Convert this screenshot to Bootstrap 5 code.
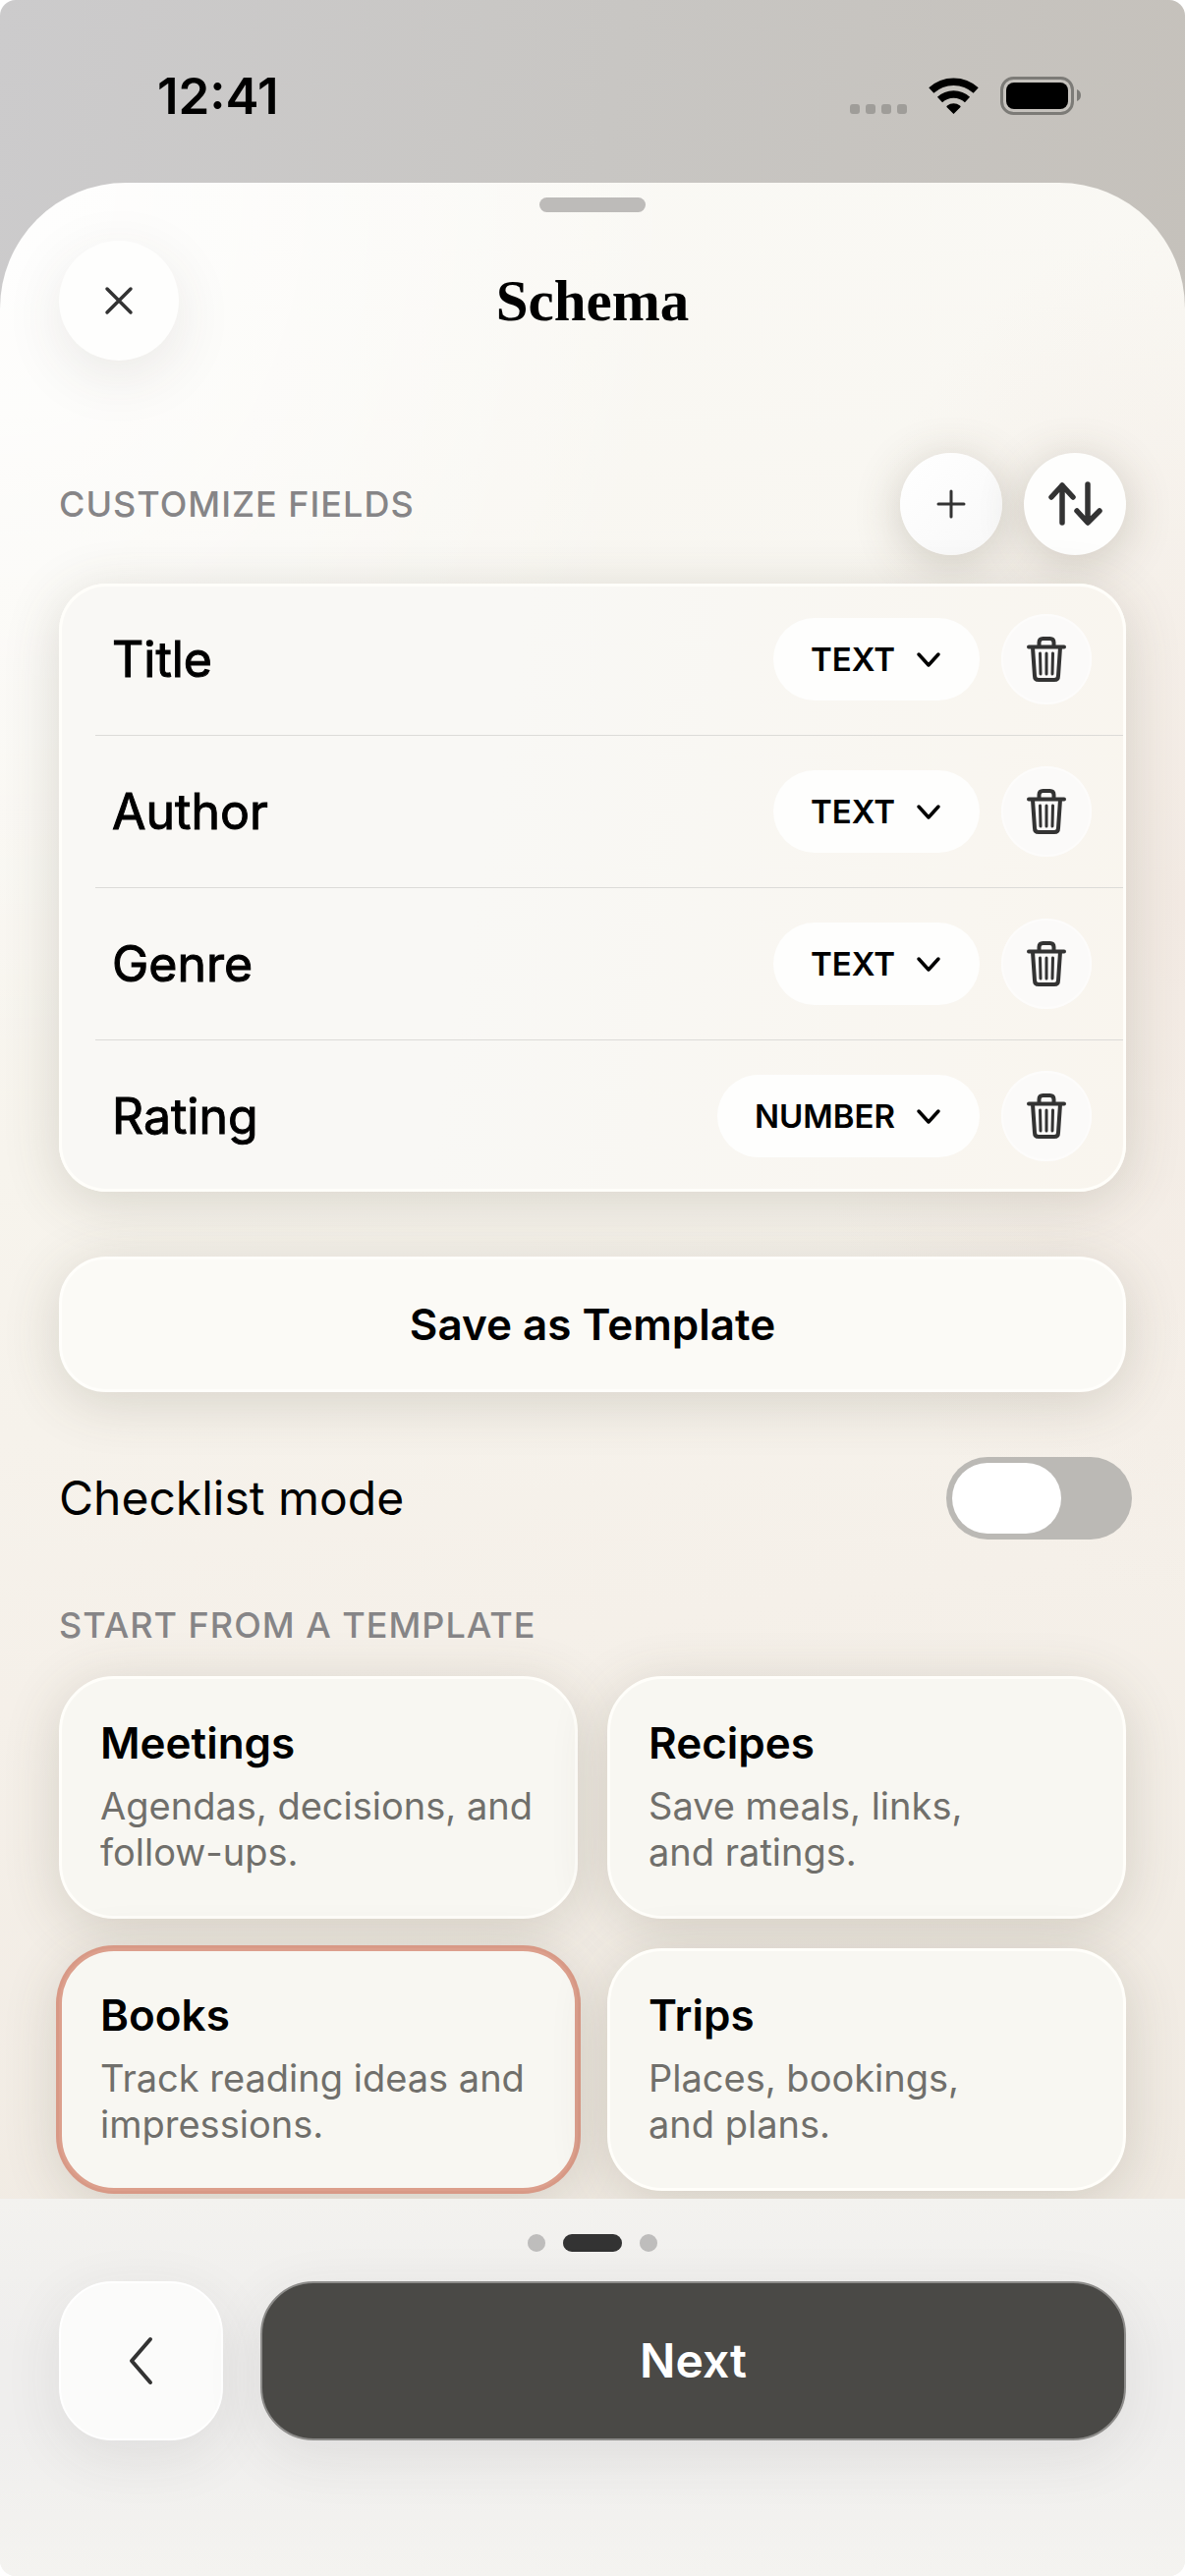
<!DOCTYPE html>
<html lang="en">
<head>
<meta charset="utf-8">
<meta name="viewport" content="width=device-width, initial-scale=1">
<title>Schema</title>
<link href="https://cdn.jsdelivr.net/npm/bootstrap@5.3.0/dist/css/bootstrap.min.css" rel="stylesheet">
<style>
  :root {
    --ink: #333333;
    --edge: #fffefa;
    --soft-shadow: 0 10px 56px rgba(80, 72, 52, .19);
  }
  html { background: #fff; }
  body { font-family: Inter, "Liberation Sans", sans-serif; color: #000; background: #fff; }
  .screen {
    border-radius: 16px;
    overflow: hidden;
    background: linear-gradient(100deg, #cccbcc 0, #c8c6c3 50%, #c5c1bb 100%) top / 100% 420px no-repeat, #f2f1ef;
  }
  .statusbar { height: 186px; padding: 50px 106px 0 160px; }
  .clock { font-size: 51px; line-height: 96px; font-weight: 600; }
  .status-icons { margin-top: 28px; }

  .sheet {
    border-radius: 128px 128px 0 0;
    overflow: hidden;
    background:
      radial-gradient(700px 900px at 0 0, rgba(255,255,255,.9), rgba(255,255,255,0)),
      radial-gradient(400px 700px at 100% 36%, rgba(240,229,222,.7), rgba(240,229,222,0)),
      linear-gradient(172deg, #faf9f5 0, #f7f4ed 45%, #f5f0e9 70%, #f0eae2 100%);
  }
  .grabber { width: 108px; height: 15px; margin: 15px auto 29px; background: #bdbbb9; }
  .titlebar { display: grid; grid-template-columns: 122px 1fr 122px; }
  .sheet-title { font-family: "Liberation Serif", serif; font-weight: 700; font-size: 59px; line-height: 64px; }
  .side-pad { padding-left: 60px; padding-right: 60px; }

  .fields-head { margin-top: 94px; margin-bottom: 29px; }
  .tool-gap { gap: 22px; }
  .round-btn { border: 0; padding: 0; color: var(--ink); background: #fefefd; border-radius: 50%; display: flex; align-items: center; justify-content: center; flex: none; }
  .round-lg { width: 122px; height: 122px; box-shadow: 0 16px 60px rgba(70, 58, 50, .1); }
  .round-md { width: 104px; height: 104px; box-shadow: 0 8px 48px rgba(80, 72, 52, .24); }
  .round-sm { width: 92px; height: 92px; margin-left: 22px; background: #fbfaf9; box-shadow: inset 0 0 0 2px #fdfcfb; }
  .round-faint { background: linear-gradient(135deg, #fff, #f8f8f8); }

  .section-label { font-size: 36px; line-height: 44px; font-weight: 500; color: #868587; letter-spacing: 1px; }
  .template-label { margin: 65px 0 30px; }

  .panel { position: relative; background: linear-gradient(100deg, #f9f8f5 40%, #f9f5ee); border-radius: 48px; box-shadow: inset 0 0 0 3px var(--edge), var(--soft-shadow); }
  .field-row { height: 155px; margin: 0 3px 0 37px; padding: 0 32px 0 17px; border-bottom: 1px solid #dcdbd8; }
  .field-row:last-child { height: 154px; border-bottom: 0; }
  .field-name { font-size: 50px; line-height: 60px; font-weight: 400; -webkit-text-stroke: 1px #000; }
  .type-select { appearance: none; border: 0; height: 84px; border-radius: 42px; padding: 0 0 0 38px; background: #fefefd; color: #000; font-size: 33px; line-height: 40px; font-weight: 600; }
  .type-text { width: 210px; }
  .type-number { width: 267px; }
  .type-arrow { position: absolute; right: 39px; top: 34px; pointer-events: none; }

  .save-btn { height: 138px; margin-top: 66px; border: 3px solid #fffefb; border-radius: 48px; background: #fbfaf6; box-shadow: var(--soft-shadow); font-size: 44px; line-height: 54px; font-weight: 600; color: #000; }

  .toggle-row { margin-top: 66px; margin-right: -6px; }
  .toggle-name { font-size: 48px; line-height: 60px; }
  .toggle-input { appearance: none; margin: 0; width: 189px; height: 84px; padding: 6px; border-radius: 42px; background: #bbb9b5; display: flex; }
  .toggle-input::before { content: ""; width: 111px; height: 72px; border-radius: 36px; background: #fff; }
  .toggle-input:checked { justify-content: flex-end; background: #333; }

  .tile-grid { gap: 30px; display: grid; grid-template-columns: 1fr 1fr; padding-bottom: 8px; }
  .tile { height: 247px; padding: 38px 26px 0 39px; border: 3px solid var(--edge); border-radius: 56px; background: #f8f7f2; box-shadow: var(--soft-shadow); text-align: left; color: #000; }
  .tile-picked { border-color: #dc9f8c; box-shadow: 0 0 0 3px #d89986, var(--soft-shadow); }
  .tile-title { font-size: 44px; line-height: 54px; font-weight: 600; }
  .tile-text { font-size: 38px; line-height: 47px; color: #706f6b; margin-top: 14px; }

  .bottombar { flex: 1; padding-top: 36px; padding-bottom: 138px; background: linear-gradient(#f3f2ef, #efeeed 40%, #efeeed 60%, #f4f3f0); }
  .pager { gap: 18px; margin-bottom: 30px; }
  .pager-dot { width: 18px; height: 18px; background: #bebdbc; }
  .pager-now { width: 60px; background: #333; }
  .action-gap { gap: 38px; }
  .back-btn { width: 167px; height: 162px; border: 2px solid #fff; border-radius: 54px; background: #fbfbfa; color: var(--ink); flex: none; box-shadow: 0 16px 60px rgba(60, 55, 50, .09); }
  .next-btn { height: 162px; border: 2px solid #8d8c8a; border-radius: 54px; background: #4a4946; color: #fff; font-size: 48px; line-height: 58px; font-weight: 600; box-shadow: 0 16px 60px rgba(60, 55, 50, .09); }
</style>
</head>
<body>
<svg class="d-none" aria-hidden="true">
  <symbol id="trash" viewBox="0 0 40 46"><g fill="none" stroke="currentColor" stroke-width="4" stroke-linecap="round" stroke-linejoin="round"><path d="M2 10.500h36M12.500 10V6q0-4 4-4h7q4 0 4 4v4M6 11l2 29q0 4 4 4h16q4 0 4-4l2-29"/><path stroke-width="3" d="M13.500 17l.5 21M20 17v21M26.500 17l-.5 21"/></g></symbol>
  <symbol id="caret" viewBox="0 0 26 18"><path d="M3 3l10 11L23 3" fill="none" stroke="#000" stroke-width="3.500" stroke-linecap="round" stroke-linejoin="round"/></symbol>
</svg>
<div class="screen min-vh-100 d-flex flex-column">
  <div class="statusbar d-flex justify-content-between">
    <div class="clock">12:41</div>
    <svg class="status-icons" width="236" height="40" viewBox="0 0 236 40" role="img" aria-label="No signal, Wi-Fi, battery full">
      <g fill="#9f9d99"><rect x="1" y="28" width="10" height="10" rx="3"/><rect x="17" y="28" width="10" height="10" rx="3"/><rect x="33" y="28" width="10" height="10" rx="3"/><rect x="49" y="28" width="10" height="10" rx="3"/></g>
      <path d="M106.500 38l-7-7q-.5-1 .5-1.600a11 11 0 0 1 13 0q1 .6.500 1.600z"/>
      <g fill="none" stroke="#000" stroke-width="7.500"><path d="M92.500 23.500a20.500 20.500 0 0 1 28 0"/><path d="M83.800 14a33.500 33.500 0 0 1 45.400 0"/></g>
      <rect x="155.500" y="1.500" width="72" height="36" rx="12" fill="none" stroke="#7c7b77" stroke-width="3"/>
      <rect x="160" y="6" width="63" height="27" rx="8"/>
      <path d="M232 13q4 1.500 4 6t-4 6z" fill="#7c7b77"/>
    </svg>
  </div>

  <main class="sheet">
    <div class="grabber rounded-pill"></div>
    <header class="titlebar side-pad align-items-center">
      <button type="button" class="round-btn round-lg" aria-label="Close">
        <svg width="30" height="30" viewBox="0 0 30 30" fill="none" stroke="currentColor" stroke-width="3.500" stroke-linecap="round"><path d="M3 3l24 24M27 3L3 27"/></svg>
      </button>
      <h1 class="sheet-title text-center m-0">Schema</h1>
    </header>

    <div class="side-pad">
      <div class="fields-head d-flex align-items-center justify-content-between">
        <h2 class="section-label m-0">CUSTOMIZE FIELDS</h2>
        <div class="tool-gap d-flex">
          <button type="button" class="round-btn round-md round-faint" aria-label="Add field">
            <svg width="32" height="32" viewBox="0 0 32 32" fill="none" stroke="currentColor" stroke-width="3" stroke-linecap="round"><path d="M16 3v26M3 16h26"/></svg>
          </button>
          <button type="button" class="round-btn round-md" aria-label="Reorder fields">
            <svg width="56" height="48" viewBox="0 0 56 48" fill="none" stroke="currentColor" stroke-width="5.500" stroke-linecap="round" stroke-linejoin="round"><path d="M15 43V5M4 17L15 5l11 12M41 4v38M30 31l11 12 12-12"/></svg>
          </button>
        </div>
      </div>

      <section class="panel">
        <div class="field-row d-flex align-items-center">
          <label class="field-name me-auto" for="type1">Title</label>
          <div class="position-relative">
            <select id="type1" class="type-select type-text"><option>TEXT</option><option>NUMBER</option></select>
            <svg class="type-arrow" width="26" height="18"><use href="#caret"/></svg>
          </div>
          <button type="button" class="round-btn round-sm" aria-label="Delete Title"><svg width="40" height="46"><use href="#trash"/></svg></button>
        </div>
        <div class="field-row d-flex align-items-center">
          <label class="field-name me-auto" for="type2">Author</label>
          <div class="position-relative">
            <select id="type2" class="type-select type-text"><option>TEXT</option><option>NUMBER</option></select>
            <svg class="type-arrow" width="26" height="18"><use href="#caret"/></svg>
          </div>
          <button type="button" class="round-btn round-sm" aria-label="Delete Author"><svg width="40" height="46"><use href="#trash"/></svg></button>
        </div>
        <div class="field-row d-flex align-items-center">
          <label class="field-name me-auto" for="type3">Genre</label>
          <div class="position-relative">
            <select id="type3" class="type-select type-text"><option>TEXT</option><option>NUMBER</option></select>
            <svg class="type-arrow" width="26" height="18"><use href="#caret"/></svg>
          </div>
          <button type="button" class="round-btn round-sm" aria-label="Delete Genre"><svg width="40" height="46"><use href="#trash"/></svg></button>
        </div>
        <div class="field-row d-flex align-items-center">
          <label class="field-name me-auto" for="type4">Rating</label>
          <div class="position-relative">
            <select id="type4" class="type-select type-number"><option>TEXT</option><option selected>NUMBER</option></select>
            <svg class="type-arrow" width="26" height="18"><use href="#caret"/></svg>
          </div>
          <button type="button" class="round-btn round-sm" aria-label="Delete Rating"><svg width="40" height="46"><use href="#trash"/></svg></button>
        </div>
      </section>

      <button type="button" class="save-btn w-100">Save as Template</button>

      <div class="toggle-row d-flex align-items-center justify-content-between">
        <label class="toggle-name" for="checklist">Checklist mode</label>
        <input class="toggle-input" type="checkbox" role="switch" id="checklist">
      </div>

      <h2 class="section-label template-label">START FROM A TEMPLATE</h2>
      <div class="tile-grid">
        <button type="button" class="tile d-flex flex-column"><span class="tile-title">Meetings</span><span class="tile-text">Agendas, decisions, and<br>follow-ups.</span></button>
        <button type="button" class="tile d-flex flex-column"><span class="tile-title">Recipes</span><span class="tile-text">Save meals, links,<br>and ratings.</span></button>
        <button type="button" class="tile tile-picked d-flex flex-column" aria-pressed="true"><span class="tile-title">Books</span><span class="tile-text">Track reading ideas and<br>impressions.</span></button>
        <button type="button" class="tile d-flex flex-column"><span class="tile-title">Trips</span><span class="tile-text">Places, bookings,<br>and plans.</span></button>
      </div>
    </div>
  </main>

  <footer class="bottombar side-pad">
    <div class="pager d-flex justify-content-center">
      <span class="pager-dot rounded-pill"></span><span class="pager-dot pager-now rounded-pill"></span><span class="pager-dot rounded-pill"></span>
    </div>
    <div class="action-gap d-flex">
      <button type="button" class="back-btn d-flex align-items-center justify-content-center" aria-label="Back">
        <svg width="26" height="50" viewBox="0 0 26 50" fill="none" stroke="currentColor" stroke-width="4" stroke-linecap="round" stroke-linejoin="round"><path d="M22 3L3 25l19 22"/></svg>
      </button>
      <button type="button" class="next-btn flex-grow-1">Next</button>
    </div>
  </footer>
</div>
<script src="https://cdn.jsdelivr.net/npm/bootstrap@5.3.0/dist/js/bootstrap.bundle.min.js"></script>
</body>
</html>
